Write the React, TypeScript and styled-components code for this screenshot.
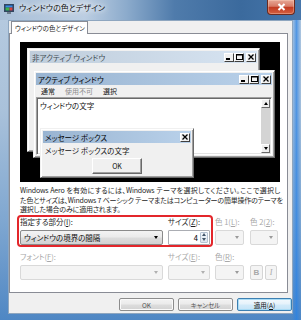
import React from 'react';
import styled, { createGlobalStyle } from 'styled-components';

const GlobalStyle = createGlobalStyle`
  html, body {
    margin: 0;
    padding: 0;
    background: #ffffff;
  }
  body {
    font-family: "Noto Sans CJK JP", "Noto Sans", sans-serif;
    font-feature-settings: "palt";
  }
  * { box-sizing: border-box; }
`;

const Frame = styled.div`
  width: 301px;
  height: 320px;
  overflow: hidden;
  display: flex;
  flex-direction: column;
  background:
    linear-gradient(90deg, rgba(255,255,255,0) 97%, rgba(40,130,230,0.7) 98.5%, rgba(255,255,255,0) 100%),
    linear-gradient(180deg, #b7cbe0 0%, #a9c1da 35%, #7ea6d0 70%, #4f87c4 100%);
`;

const TitleBar = styled.div`
  height: 20px;
  flex: none;
  display: flex;
  align-items: flex-start;
  background: linear-gradient(90deg, #aac0d8 0%, #bccee2 28%, #8cabcc 42%, #4f7bab 58%, #3b6a9d 80%, #4676ab 100%);
`;

const AppIcon = styled.svg`
  width: 10px;
  height: 10px;
  margin: 4px 0 0 4px;
  flex: none;
`;

const Title = styled.div`
  margin: 2px 0 0 5px;
  font-size: 8px;
  line-height: 11px;
  color: #101010;
  text-shadow: 0 0 4px #ffffff, 0 0 7px #ffffff, 0 0 10px rgba(255, 255, 255, 0.9);
  white-space: nowrap;
`;

const CloseBtn = styled.div`
  margin-left: auto;
  margin-right: 6px;
  width: 28px;
  height: 15px;
  display: flex;
  align-items: center;
  justify-content: center;
  border: 1px solid #6b2a1f;
  border-top: none;
  border-radius: 0 0 4px 4px;
  background: linear-gradient(180deg, #e7a896 0%, #d77a66 45%, #c23b22 52%, #d4603f 100%);
  box-shadow: inset 0 0 0 1px rgba(255, 220, 200, 0.35);
`;

const Body = styled.div`
  flex: 1;
  min-height: 0;
  display: flex;
  padding: 0 8px 6px 8px;
`;

const Client = styled.div`
  flex: 1;
  min-width: 0;
  display: flex;
  flex-direction: column;
  background: #f0f0f0;
  border: 1px solid #8ea6bf;
`;

const TabStrip = styled.div`
  display: flex;
  height: 12px;
  padding-left: 2px;
  position: relative;
  z-index: 1;
`;

const Tab = styled.div`
  width: 77px;
  height: 13px;
  padding-left: 3px;
  background: #ffffff;
  border: 1px solid #898c95;
  border-bottom: none;
  font-size: 6.5px;
  line-height: 12px;
  color: #222;
  white-space: nowrap;
`;

const Panel = styled.div`
  height: 260px;
  margin-right: 4px;
  padding: 8px 0 0 10px;
  background: #ffffff;
  border: 1px solid #898c95;
  display: flex;
  flex-direction: column;
  overflow: hidden;
`;

const Preview = styled.div`
  position: relative;
  flex: none;
  width: 260px;
  height: 140px;
  background: #000000;
`;

const Win = styled.div<{ $x: number; $y: number; $w: number; $h: number }>`
  position: absolute;
  left: ${p => p.$x}px;
  top: ${p => p.$y}px;
  width: ${p => p.$w}px;
  height: ${p => p.$h}px;
  display: flex;
  flex-direction: column;
  padding: 2px;
  background: #f0f0f0;
  border: 1px solid;
  border-color: #f0f0f0 #696969 #696969 #f0f0f0;
  box-shadow: inset 1px 1px 0 #ffffff, inset -1px -1px 0 #a0a0a0;
`;

const Caption = styled.div<{ $active?: boolean }>`
  flex: none;
  height: 12px;
  display: flex;
  align-items: center;
  padding: 0 1px 0 2px;
  background: ${p => (p.$active ? 'linear-gradient(90deg, #99b4d1, #b9d1ea)' : 'linear-gradient(90deg, #bfcddb, #d7e4f2)')};
  color: ${p => (p.$active ? '#000000' : '#434e54')};
  font-size: 7.5px;
  white-space: nowrap;
`;

const CapButtons = styled.div`
  margin-left: auto;
  display: flex;
`;

const CapBtn = styled.div<{ $gap?: boolean }>`
  width: 10px;
  height: 9px;
  margin-left: ${p => (p.$gap ? 2 : 0)}px;
  display: flex;
  align-items: center;
  justify-content: center;
  background: #f0f0f0;
  border: 1px solid;
  border-color: #ffffff #404040 #404040 #ffffff;
`;

const MenuBar = styled.div`
  flex: none;
  height: 12px;
  display: flex;
  align-items: center;
  gap: 10px;
  padding-left: 5px;
  font-size: 7px;
`;

const MenuItem = styled.span<{ $disabled?: boolean }>`
  color: ${p => (p.$disabled ? '#8d8d8d' : '#1a1a1a')};
`;

const WinClient = styled.div`
  flex: 1;
  display: flex;
  background: #ffffff;
  border: 1px solid;
  border-color: #a0a0a0 #ffffff #ffffff #a0a0a0;
  box-shadow: inset 1px 1px 0 #696969, inset -1px -1px 0 #e3e3e3;
`;

const WinText = styled.div`
  flex: 1;
  padding: 3px 0 0 3px;
  font-size: 7.5px;
  line-height: 10px;
  color: #111;
`;

const ScrollBar = styled.div`
  width: 9px;
  margin: 1px 1px 1px 0;
  display: flex;
  flex-direction: column;
  justify-content: space-between;
  background: #d4d4d4;
`;

const ScrollBtn = styled.div`
  height: 9px;
  display: flex;
  align-items: center;
  justify-content: center;
  background: #f0f0f0;
  border: 1px solid;
  border-color: #ffffff #696969 #696969 #ffffff;
`;

const Arrow = styled.span<{ $down?: boolean; $color?: string }>`
  width: 0;
  height: 0;
  border-left: 2.5px solid transparent;
  border-right: 2.5px solid transparent;
  ${p => (p.$down ? 'border-top' : 'border-bottom')}: 3px solid ${p => p.$color || '#000'};
`;

const MsgText = styled.div`
  margin: 3px 0 0 2px;
  font-size: 7.5px;
  line-height: 10px;
  color: #111;
  white-space: nowrap;
`;

const MsgButton = styled.div`
  align-self: center;
  margin-top: 2px;
  width: 50px;
  height: 16px;
  display: flex;
  align-items: center;
  justify-content: center;
  font-size: 7px;
  color: #111;
  background: #f0f0f0;
  border: 1px solid;
  border-color: #ffffff #696969 #696969 #ffffff;
  box-shadow: inset -1px -1px 0 #a0a0a0;
`;

const Desc = styled.div`
  margin-top: 4px;
  width: 260px;
  font-size: 7px;
  letter-spacing: -0.2px;
  line-height: 9.5px;
  color: #262626;
  white-space: nowrap;
`;

const DescLine = styled.div<{ $full?: boolean }>`
  text-align: ${p => (p.$full ? 'justify' : 'left')};
  text-align-last: ${p => (p.$full ? 'justify' : 'left')};
`;

const Controls = styled.div`
  margin-left: -3px;
  display: flex;
  flex-direction: column;
`;

const Row = styled.div<{ $first?: boolean }>`
  display: flex;
  align-items: flex-start;
  margin-top: ${p => (p.$first ? 0 : 3)}px;
`;

const Group = styled.div<{ $marked?: boolean }>`
  display: flex;
  gap: 5px;
  padding: 0 1px;
  border: 2px solid ${p => (p.$marked ? '#e3262b' : 'transparent')};
  border-radius: 4px;
`;

const Side = styled.div`
  display: flex;
  gap: 6px;
  margin-left: 2px;
  padding-top: 2px;
`;

const Field = styled.div`
  display: flex;
  flex-direction: column;
  gap: 3px;
`;

const Label = styled.div<{ $disabled?: boolean }>`
  height: 10px;
  font-size: 7.5px;
  line-height: 10px;
  color: ${p => (p.$disabled ? '#a8a8a8' : '#1e1e1e')};
  white-space: nowrap;
`;

const Combo = styled.div<{ $w: number; $disabled?: boolean }>`
  width: ${p => p.$w}px;
  height: 15px;
  display: flex;
  align-items: center;
  justify-content: space-between;
  padding: 0 4px 0 3px;
  font-size: 7.5px;
  color: #111;
  border: 1px solid ${p => (p.$disabled ? '#d9d9d9' : '#8a8a8a')};
  border-radius: 2px;
  background: ${p =>
    p.$disabled
      ? '#f4f4f4'
      : 'linear-gradient(180deg, #f3f3f3 0%, #ebebeb 48%, #dddddd 52%, #d2d2d2 100%)'};
`;

const Spinner = styled.div`
  width: 42px;
  height: 15px;
  display: flex;
  align-items: center;
  justify-content: flex-end;
  gap: 2px;
  padding-right: 1px;
  font-size: 7.5px;
  background: #ffffff;
  border: 1px solid #abadb3;
  border-radius: 1px;
`;

const SpinBox = styled.div`
  width: 8px;
  height: 11px;
  display: flex;
  flex-direction: column;
  border: 1px solid #b5c3d3;
  border-radius: 1px;
  background: linear-gradient(180deg, #f2f6fb, #dde6ef);
`;

const SpinHalf = styled.div`
  flex: 1;
  display: flex;
  align-items: center;
  justify-content: center;
`;

const StyleButtons = styled.div`
  display: flex;
  gap: 2px;
`;

const StyleBtn = styled.div<{ $italic?: boolean }>`
  width: ${p => (p.$italic ? 12 : 13)}px;
  height: 15px;
  display: flex;
  align-items: center;
  justify-content: center;
  font-family: ${p => (p.$italic ? '"Liberation Serif", serif' : '"Liberation Sans", sans-serif')};
  font-weight: ${p => (p.$italic ? 400 : 700)};
  font-style: ${p => (p.$italic ? 'italic' : 'normal')};
  font-size: 8px;
  color: #a8a8a8;
  background: #f4f4f4;
  border: 1px solid #d5d5d5;
  border-radius: 2px;
`;

const ButtonRow = styled.div`
  display: flex;
  justify-content: flex-end;
  gap: 4px;
  margin-top: 5px;
`;

const DlgButton = styled.div<{ $default?: boolean }>`
  width: 55px;
  height: 13px;
  display: flex;
  align-items: center;
  justify-content: center;
  font-size: 6.5px;
  color: ${p => (p.$default ? '#111' : '#555')};
  border: 1px solid ${p => (p.$default ? '#3c7fb1' : '#8c8c8c')};
  border-radius: 2px;
  background: ${p =>
    p.$default
      ? 'linear-gradient(180deg, #f3f9fd 0%, #e5f2fb 48%, #d3ebfa 52%, #c6e3f6 100%)'
      : 'linear-gradient(180deg, #f3f3f3 0%, #ebebeb 48%, #dddddd 52%, #d2d2d2 100%)'};
  box-shadow: ${p => (p.$default ? 'inset 0 0 0 1px #a9dcf6' : 'inset 0 0 0 1px #fafafa')};
`;

const Glyph = styled.svg`
  display: block;
`;

const MinGlyph = () => (
  <Glyph width="6" height="6" viewBox="0 0 6 6">
    <rect x="0" y="4" width="4" height="2" fill="#000" />
  </Glyph>
);

const MaxGlyph = () => (
  <Glyph width="7" height="6" viewBox="0 0 7 6">
    <rect x="0.5" y="0.5" width="6" height="5" fill="none" stroke="#000" />
    <rect x="0" y="0" width="7" height="1.5" fill="#000" />
  </Glyph>
);

const XGlyph = () => (
  <Glyph width="6" height="6" viewBox="0 0 6 6">
    <path d="M0.5 0.5 L5.5 5.5 M5.5 0.5 L0.5 5.5" stroke="#000" strokeWidth="1.3" />
  </Glyph>
);

const TitleButtons = ({ onlyClose }: { onlyClose?: boolean }) => (
  <CapButtons>
    {!onlyClose && (
      <>
        <CapBtn><MinGlyph /></CapBtn>
        <CapBtn><MaxGlyph /></CapBtn>
      </>
    )}
    <CapBtn $gap={!onlyClose}><XGlyph /></CapBtn>
  </CapButtons>
);

export default function App() {
  return (
    <>
      <GlobalStyle />
      <Frame>
        <TitleBar>
          <AppIcon viewBox="0 0 10 10">
            <rect x="0.5" y="0.5" width="9" height="7" fill="#1d3c6e" stroke="#33465e" />
            <rect x="1.5" y="1.5" width="7" height="2" fill="#3b8be0" />
            <rect x="1.5" y="3.5" width="4" height="3" fill="#41b04a" />
            <rect x="5.5" y="3.5" width="3" height="3" fill="#d9453a" />
            <rect x="3" y="8" width="4" height="2" fill="#6d7c8c" />
          </AppIcon>
          <Title>ウィンドウの色とデザイン</Title>
          <CloseBtn>
            <svg width="9" height="8" viewBox="0 0 9 8">
              <path d="M1.5 1 L7.5 7 M7.5 1 L1.5 7" stroke="#ffffff" strokeWidth="2" />
            </svg>
          </CloseBtn>
        </TitleBar>
        <Body>
          <Client>
            <TabStrip>
              <Tab>ウィンドウの色とデザイン</Tab>
            </TabStrip>
            <Panel>
              <Preview>
                <Win $x={7} $y={6} $w={233} $h={104}>
                  <Caption>
                    非アクティブ ウィンドウ
                    <TitleButtons />
                  </Caption>
                </Win>
                <Win $x={13} $y={28} $w={242} $h={88}>
                  <Caption $active>
                    アクティブ ウィンドウ
                    <TitleButtons />
                  </Caption>
                  <MenuBar>
                    <MenuItem>通常</MenuItem>
                    <MenuItem $disabled>使用不可</MenuItem>
                    <MenuItem>選択</MenuItem>
                  </MenuBar>
                  <WinClient>
                    <WinText>ウィンドウの文字</WinText>
                    <ScrollBar>
                      <ScrollBtn><Arrow /></ScrollBtn>
                      <ScrollBtn><Arrow $down /></ScrollBtn>
                    </ScrollBar>
                  </WinClient>
                </Win>
                <Win $x={20} $y={86} $w={154} $h={50}>
                  <Caption $active>
                    メッセージ ボックス
                    <TitleButtons onlyClose />
                  </Caption>
                  <MsgText>メッセージ ボックスの文字</MsgText>
                  <MsgButton>OK</MsgButton>
                </Win>
              </Preview>
              <Desc>
                <DescLine $full>Windows Aero を有効にするには、Windows テーマを選択してください。ここで選択し</DescLine>
                <DescLine $full>た色とサイズは、Windows 7 ベーシック テーマまたはコンピューターの簡単操作のテーマを</DescLine>
                <DescLine>選択した場合のみに適用されます。</DescLine>
              </Desc>
              <Controls>
                <Row $first>
                  <Group $marked>
                    <Field>
                      <Label>指定する部分(<u>I</u>):</Label>
                      <Combo $w={143}>
                        ウィンドウの境界の間隔
                        <Arrow $down />
                      </Combo>
                    </Field>
                    <Field>
                      <Label>サイズ(<u>Z</u>):</Label>
                      <Spinner>
                        4
                        <SpinBox>
                          <SpinHalf><Arrow $color="#44576b" /></SpinHalf>
                          <SpinHalf><Arrow $down $color="#44576b" /></SpinHalf>
                        </SpinBox>
                      </Spinner>
                    </Field>
                  </Group>
                  <Side>
                    <Field>
                      <Label $disabled>色 1(<u>L</u>):</Label>
                      <Combo $w={29} $disabled>
                        <span />
                        <Arrow $down $color="#9a9a9a" />
                      </Combo>
                    </Field>
                    <Field>
                      <Label $disabled>色 2(<u>2</u>):</Label>
                      <Combo $w={28} $disabled>
                        <span />
                        <Arrow $down $color="#9a9a9a" />
                      </Combo>
                    </Field>
                  </Side>
                </Row>
                <Row>
                  <Group>
                    <Field>
                      <Label $disabled>フォント(<u>F</u>):</Label>
                      <Combo $w={143} $disabled>
                        <span />
                        <Arrow $down $color="#b0b0b0" />
                      </Combo>
                    </Field>
                    <Field>
                      <Label $disabled>サイズ(<u>E</u>):</Label>
                      <Combo $w={42} $disabled>
                        <span />
                        <Arrow $down $color="#b0b0b0" />
                      </Combo>
                    </Field>
                  </Group>
                  <Side>
                    <Field>
                      <Label $disabled>色(<u>R</u>):</Label>
                      <Combo $w={29} $disabled>
                        <span />
                        <Arrow $down $color="#9a9a9a" />
                      </Combo>
                    </Field>
                    <Field>
                      <Label />
                      <StyleButtons>
                        <StyleBtn>B</StyleBtn>
                        <StyleBtn $italic>I</StyleBtn>
                      </StyleButtons>
                    </Field>
                  </Side>
                </Row>
              </Controls>
            </Panel>
            <ButtonRow>
              <DlgButton>OK</DlgButton>
              <DlgButton>キャンセル</DlgButton>
              <DlgButton $default>適用(<u>A</u>)</DlgButton>
            </ButtonRow>
          </Client>
        </Body>
      </Frame>
    </>
  );
}
